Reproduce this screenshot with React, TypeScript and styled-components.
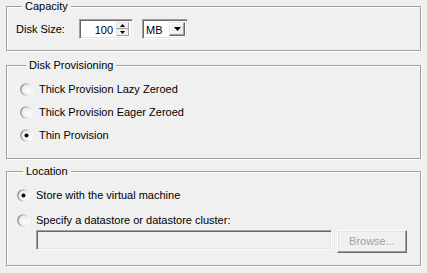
import React from "react";
import styled, { createGlobalStyle } from "styled-components";

const Global = createGlobalStyle`
  html, body { margin: 0; padding: 0; background: #f0f0f0; }
  body { font-family: "Liberation Sans", Arial, sans-serif; font-size: 11px; color: #000; }
`;

const Page = styled.div`
  width: 427px;
  height: 273px;
  box-sizing: border-box;
  padding: 0 6px;
  display: flex;
  flex-direction: column;
`;

const Group = styled.fieldset<{ $top: number; $pl: number; $pt: number; $pb: number }>`
  margin: ${(p) => p.$top}px 0 0 0;
  padding: ${(p) => p.$pt}px 8px ${(p) => p.$pb}px ${(p) => p.$pl}px;
  border: 1px solid #a0a0a0;
  box-shadow: 1px 1px 0 #ffffff, inset 1px 1px 0 #ffffff;
  min-width: 0;
`;

const Legend = styled.legend`
  margin-left: 6px;
  padding: 0 3px;
  line-height: 13px;
  background: #f0f0f0;
`;

const Row = styled.div<{ $h: number; $mt?: number }>`
  display: flex;
  align-items: center;
  height: ${(p) => p.$h}px;
  margin-top: ${(p) => p.$mt ?? 0}px;
`;

const Label = styled.span`
  width: 63px;
  line-height: 13px;
`;

const Sunken = styled.div<{ $w: number; $bg?: string }>`
  box-sizing: border-box;
  width: ${(p) => p.$w}px;
  height: 20px;
  border-top: 1px solid #a0a0a0;
  border-left: 1px solid #a0a0a0;
  border-bottom: 1px solid #ffffff;
  border-right: 1px solid #ffffff;
  box-shadow: inset 1px 1px 0 #696969, inset -1px -1px 0 #e3e3e3;
  background: ${(p) => p.$bg ?? "#ffffff"};
  display: flex;
  align-items: stretch;
  padding: 2px;
`;

const Value = styled.span<{ $align: string }>`
  flex: 1;
  text-align: ${(p) => p.$align};
  line-height: 16px;
  padding: 0 3px 0 1px;
`;

const SpinCol = styled.div`
  display: flex;
  flex-direction: column;
  width: 13px;
  margin-right: 1px;
`;

const RaisedSmall = styled.div`
  box-sizing: border-box;
  flex: 1;
  background: #f0f0f0;
  border-top: 1px solid #e3e3e3;
  border-left: 1px solid #e3e3e3;
  border-bottom: 1px solid #a0a0a0;
  border-right: 1px solid #a0a0a0;
  display: flex;
  align-items: center;
  justify-content: center;
`;

const DropBtn = styled.div`
  box-sizing: border-box;
  width: 16px;
  background: #f0f0f0;
  border-top: 1px solid #e3e3e3;
  border-left: 1px solid #e3e3e3;
  border-bottom: 1px solid #696969;
  border-right: 1px solid #696969;
  box-shadow: inset -1px -1px 0 #a0a0a0, inset 1px 1px 0 #ffffff;
  display: flex;
  align-items: center;
  justify-content: center;
`;

const Gap = styled.div<{ $w: number }>`
  width: ${(p) => p.$w}px;
  flex: none;
`;

const RadioLabel = styled.label`
  display: flex;
  align-items: center;
  gap: 6px;
  line-height: 13px;
`;

const InputRow = styled.div`
  display: flex;
  align-items: flex-start;
  gap: 5px;
  margin-left: 19px;
  height: 23px;
`;

const Button = styled.div`
  box-sizing: border-box;
  width: 70px;
  height: 23px;
  background: #f0f0f0;
  border-top: 1px solid #ffffff;
  border-left: 1px solid #ffffff;
  border-bottom: 1px solid #696969;
  border-right: 1px solid #696969;
  box-shadow: inset -1px -1px 0 #a0a0a0, inset 1px 1px 0 #e3e3e3;
  color: #a0a0a0;
  text-align: center;
  line-height: 21px;
`;

const Radio: React.FC<{ checked?: boolean }> = ({ checked }) => (
  <svg width="13" height="13" viewBox="0 0 13 13">
    <defs>
      <linearGradient id="rg" x1="0" y1="0" x2="1" y2="0.3">
        <stop offset="0" stopColor="#6f6f6f" />
        <stop offset="0.55" stopColor="#c8c8c8" />
        <stop offset="1" stopColor="#ffffff" />
      </linearGradient>
      <radialGradient id="rf" cx="0.6" cy="0.6" r="0.6">
        <stop offset="0" stopColor="#ffffff" />
        <stop offset="1" stopColor="#e6e6e6" />
      </radialGradient>
    </defs>
    <circle cx="6.5" cy="6.5" r="5.7" fill="url(#rf)" stroke="url(#rg)" strokeWidth="1.2" />
    {checked && <circle cx="6.5" cy="6.5" r="2" fill="#000" />}
  </svg>
);

const Tri: React.FC<{ w: number; h: number; up?: boolean }> = ({ w, h, up }) => (
  <svg width={w} height={h} viewBox={`0 0 ${w} ${h}`}>
    <polygon points={up ? `0,${h} ${w},${h} ${w / 2},0` : `0,0 ${w},0 ${w / 2},${h}`} fill="#000" />
  </svg>
);

export default function App() {
  return (
    <>
      <Global />
      <Page>
        <Group $top={0} $pl={9} $pt={6} $pb={11}>
          <Legend>Capacity</Legend>
          <Row $h={20}>
            <Label>Disk Size:</Label>
            <Sunken $w={54}>
              <Value $align="right">100</Value>
              <SpinCol>
                <RaisedSmall>
                  <Tri w={5} h={3} up />
                </RaisedSmall>
                <RaisedSmall>
                  <Tri w={5} h={3} />
                </RaisedSmall>
              </SpinCol>
            </Sunken>
            <Gap $w={9} />
            <Sunken $w={46}>
              <Value $align="left">MB</Value>
              <DropBtn>
                <Tri w={7} h={4} />
              </DropBtn>
            </Sunken>
          </Row>
        </Group>

        <Group $top={8} $pl={13} $pt={6} $pb={11}>
          <Legend>Disk Provisioning</Legend>
          <Row $h={23}>
            <RadioLabel>
              <Radio />
              Thick Provision Lazy Zeroed
            </RadioLabel>
          </Row>
          <Row $h={23}>
            <RadioLabel>
              <Radio />
              Thick Provision Eager Zeroed
            </RadioLabel>
          </Row>
          <Row $h={23}>
            <RadioLabel>
              <Radio checked />
              Thin Provision
            </RadioLabel>
          </Row>
        </Group>

        <Group $top={6} $pl={10} $pt={6} $pb={12}>
          <Legend>Location</Legend>
          <Row $h={23}>
            <RadioLabel>
              <Radio checked />
              Store with the virtual machine
            </RadioLabel>
          </Row>
          <Row $h={20} $mt={3}>
            <RadioLabel>
              <Radio />
              Specify a datastore or datastore cluster:
            </RadioLabel>
          </Row>
          <InputRow>
            <Sunken $w={296} $bg="#f0f0f0" />
            <Button>Browse...</Button>
          </InputRow>
        </Group>
      </Page>
    </>
  );
}
